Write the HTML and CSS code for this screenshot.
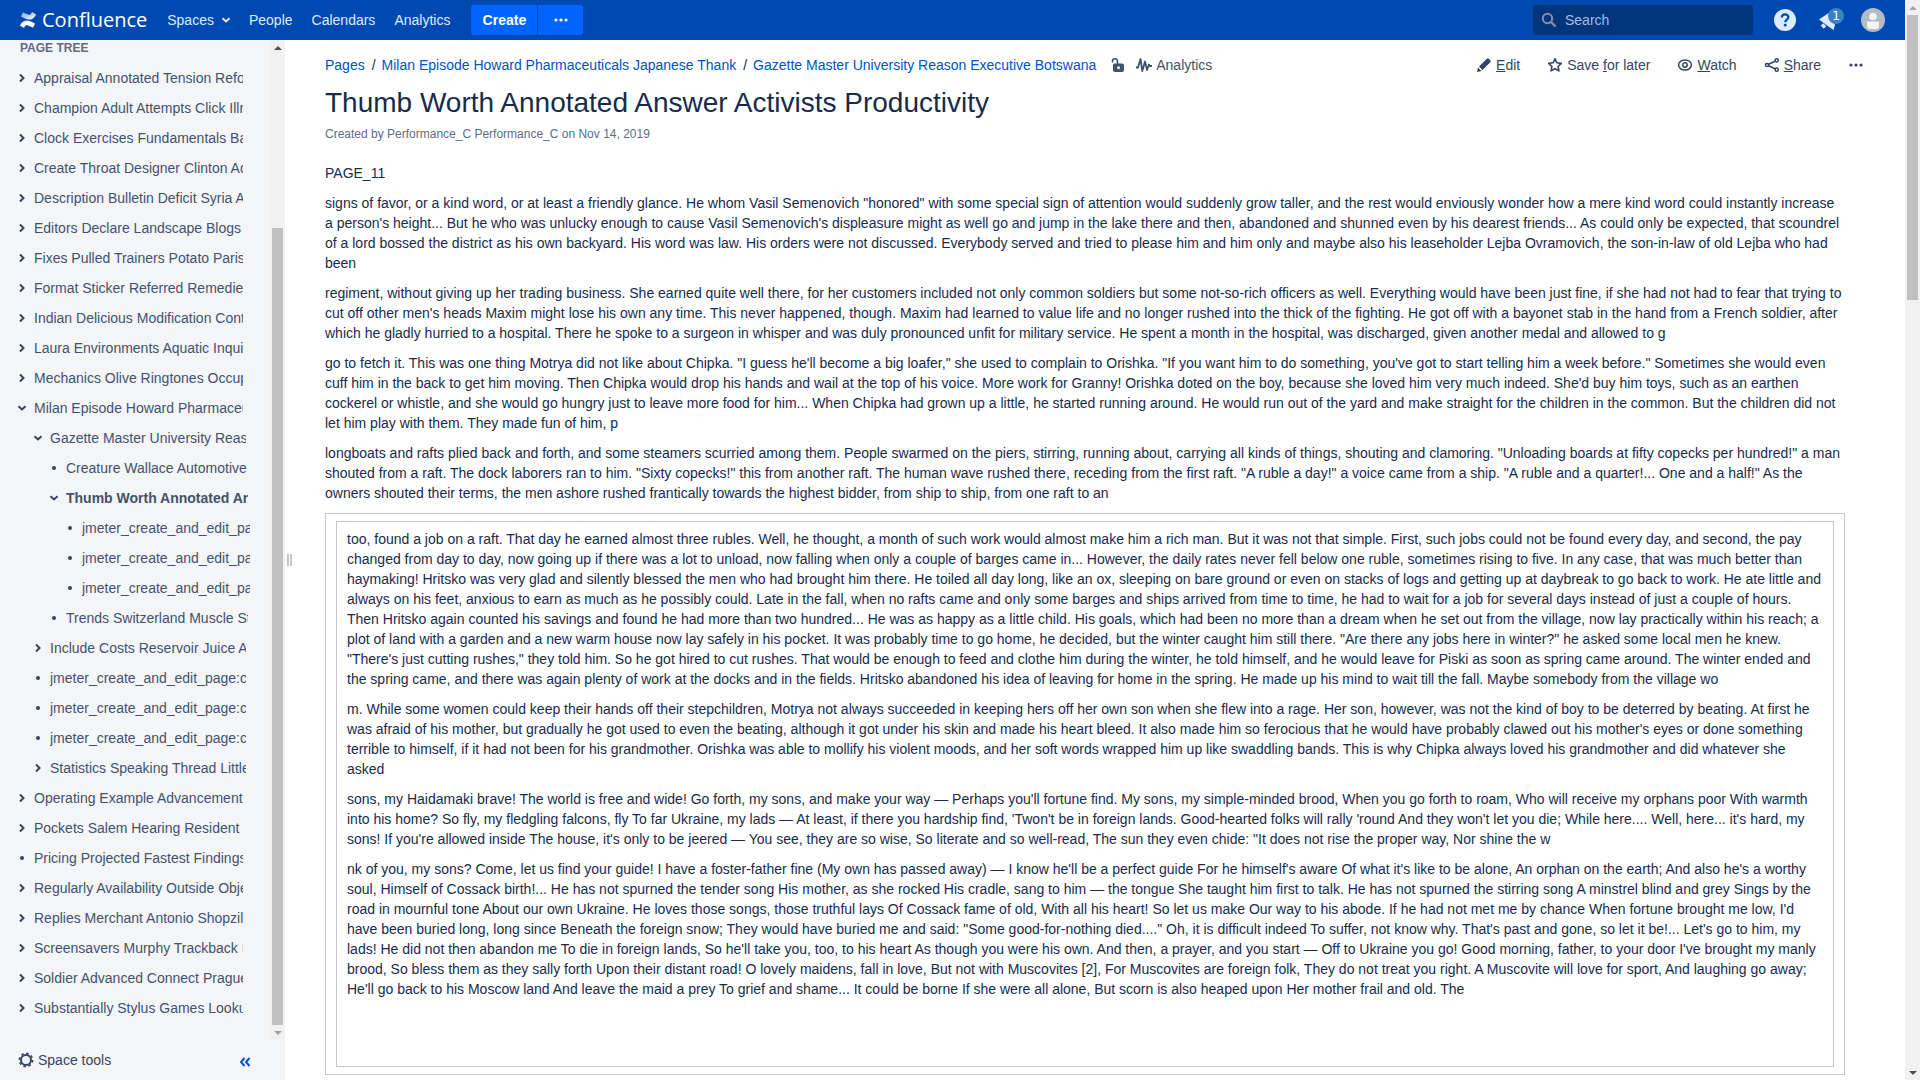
FILE: index.html
```html
<!DOCTYPE html>
<html lang="en">
<head>
<meta charset="utf-8">
<title>Thumb Worth Annotated Answer Activists Productivity - Confluence</title>
<link rel="stylesheet" href="styles.css">
</head>
<body>
<svg class="sprite" aria-hidden="true">
  <linearGradient id="fadeLow" x1="1" y1="1" x2="0" y2="0"><stop offset="0" stop-color="#fff"/><stop offset=".5" stop-color="#fff"/><stop offset="1" stop-color="#fff" stop-opacity=".8"/></linearGradient>
  <linearGradient id="fadeTop" x1="0" y1="0" x2="1" y2="1"><stop offset="0" stop-color="#fff"/><stop offset="1" stop-color="#fff" stop-opacity=".5"/></linearGradient>
  <symbol id="chev" viewBox="0 0 10 10"><path d="M3 1.5 6.5 5 3 8.5" fill="none" stroke="currentColor" stroke-width="2"/></symbol>
  <symbol id="down" viewBox="0 0 10 10"><path d="M1.5 3.2 5 6.5 8.5 3.2" fill="none" stroke="currentColor" stroke-width="2"/></symbol>
  <symbol id="dot" viewBox="0 0 10 10"><circle cx="5" cy="5" r="2" fill="currentColor"/></symbol>
  <symbol id="more" viewBox="0 0 16 16"><circle cx="3" cy="8" r="1.6" fill="currentColor"/><circle cx="8" cy="8" r="1.6" fill="currentColor"/><circle cx="13" cy="8" r="1.6" fill="currentColor"/></symbol>
</svg>
<div class="app">
  <div class="window">
    <header class="header">
      <a class="logo" href="#">
        <svg class="logo-mark" viewBox="0 0 16 16"><path id="ribbon" d="M.62 12.300c-.16.260-.340.570-.490.820a.5.5 0 0 0 .170.680l3.200 1.970a.5.5 0 0 0 .690-.160c.130-.220.300-.500.480-.800 1.250-2.060 2.520-1.810 4.790-.730l3.170 1.510a.5.5 0 0 0 .670-.250l1.520-3.440a.5.5 0 0 0-.250-.660c-.670-.310-2-.940-3.200-1.520C7.050 7.600 3.400 7.770.62 12.300z" fill="url(#fadeLow)"/><path transform="rotate(180 8 8)" d="M.62 12.300c-.16.260-.340.570-.490.820a.5.5 0 0 0 .170.680l3.200 1.970a.5.5 0 0 0 .690-.160c.130-.220.300-.500.480-.800 1.250-2.060 2.520-1.810 4.790-.730l3.170 1.510a.5.5 0 0 0 .670-.250l1.520-3.440a.5.5 0 0 0-.250-.660c-.670-.310-2-.940-3.200-1.520C7.050 7.600 3.400 7.770.62 12.300z" fill="url(#fadeTop)"/></svg>
        <span>Confluence</span>
      </a>
      <nav class="menu">
        <a href="#">Spaces <svg class="i8" viewBox="1 1 8 8"><path d="M1.500 3.200 5 6.500 8.500 3.200" fill="none" stroke="currentColor" stroke-width="2"/></svg></a>
        <a href="#">People</a>
        <a href="#">Calendars</a>
        <a href="#">Analytics</a>
      </nav>
      <div class="create">
        <button class="create-btn">Create</button>
        <button class="create-more" aria-label="Create from template"><svg class="i16"><use href="#more"/></svg></button>
      </div>
      <div class="header-right">
        <label class="search">
          <svg class="i16" viewBox="0 0 16 16"><circle cx="6.500" cy="6.500" r="4.700" fill="none" stroke="currentColor" stroke-width="2"/><path d="m10 10 4.500 4.500" stroke="currentColor" stroke-width="2.400"/></svg>
          <input type="search" placeholder="Search" aria-label="Search">
        </label>
        <button class="icon-btn" aria-label="Help"><svg class="i24" viewBox="0 0 24 24"><circle cx="12" cy="12" r="11" fill="#deebff"/><path d="M8.800 9.600c0-4.300 6.600-4.200 6.600-.4 0 2.300-3.200 2.500-3.200 5.100" fill="none" stroke="#0049b0" stroke-width="2.200"/><circle cx="12.200" cy="17.200" r="1.400" fill="#0049b0"/></svg></button>
        <button class="icon-btn notify" aria-label="Notifications"><svg class="i24" viewBox="0 0 24 24"><path d="M2 11.500 13 4l5 13-1.500 5-5-3.500z" fill="#deebff"/><path d="m5 16.500 3 3" stroke="#deebff" stroke-width="3.500"/></svg><span class="badge">1</span></button>
        <button class="icon-btn" aria-label="Profile"><svg class="i24" viewBox="0 0 24 24"><circle cx="12" cy="12" r="12" fill="#b3bac5"/><circle cx="12" cy="8.500" r="3.800" fill="#f4f5f7"/><path d="M6 13.500h12V19q-.5 2-3 2H9q-2.500 0-3-2z" fill="#f4f5f7"/></svg></button>
      </div>
    </header>
    <div class="body">
      <aside class="sidebar">
        <div class="side-scroll">
          <nav class="tree">
            <h2>PAGE TREE</h2>
            <ul>
              <li><svg class="i10"><use href="#chev"/></svg><a href="#">Appraisal Annotated Tension Reform</a></li>
              <li><svg class="i10"><use href="#chev"/></svg><a href="#">Champion Adult Attempts Click Illness</a></li>
              <li><svg class="i10"><use href="#chev"/></svg><a href="#">Clock Exercises Fundamentals Bar</a></li>
              <li><svg class="i10"><use href="#chev"/></svg><a href="#">Create Throat Designer Clinton Adult</a></li>
              <li><svg class="i10"><use href="#chev"/></svg><a href="#">Description Bulletin Deficit Syria Ants</a></li>
              <li><svg class="i10"><use href="#chev"/></svg><a href="#">Editors Declare Landscape Blogs</a></li>
              <li><svg class="i10"><use href="#chev"/></svg><a href="#">Fixes Pulled Trainers Potato Paris</a></li>
              <li><svg class="i10"><use href="#chev"/></svg><a href="#">Format Sticker Referred Remedies</a></li>
              <li><svg class="i10"><use href="#chev"/></svg><a href="#">Indian Delicious Modification Control</a></li>
              <li><svg class="i10"><use href="#chev"/></svg><a href="#">Laura Environments Aquatic Inquiry</a></li>
              <li><svg class="i10"><use href="#chev"/></svg><a href="#">Mechanics Olive Ringtones Occupied</a></li>
              <li><svg class="i10"><use href="#down"/></svg><a href="#">Milan Episode Howard Pharmaceuticals</a></li>
              <li class="l2"><svg class="i10"><use href="#down"/></svg><a href="#">Gazette Master University Reason</a></li>
              <li class="l3"><svg class="i10"><use href="#dot"/></svg><a href="#">Creature Wallace Automotive</a></li>
              <li class="l3 current"><svg class="i10"><use href="#down"/></svg><a href="#">Thumb Worth Annotated Answer</a></li>
              <li class="l4"><svg class="i10"><use href="#dot"/></svg><a href="#">jmeter_create_and_edit_page:c</a></li>
              <li class="l4"><svg class="i10"><use href="#dot"/></svg><a href="#">jmeter_create_and_edit_page:c</a></li>
              <li class="l4"><svg class="i10"><use href="#dot"/></svg><a href="#">jmeter_create_and_edit_page:c</a></li>
              <li class="l3"><svg class="i10"><use href="#dot"/></svg><a href="#">Trends Switzerland Muscle Strip</a></li>
              <li class="l2"><svg class="i10"><use href="#chev"/></svg><a href="#">Include Costs Reservoir Juice A</a></li>
              <li class="l2"><svg class="i10"><use href="#dot"/></svg><a href="#">jmeter_create_and_edit_page:create</a></li>
              <li class="l2"><svg class="i10"><use href="#dot"/></svg><a href="#">jmeter_create_and_edit_page:create</a></li>
              <li class="l2"><svg class="i10"><use href="#dot"/></svg><a href="#">jmeter_create_and_edit_page:create</a></li>
              <li class="l2"><svg class="i10"><use href="#chev"/></svg><a href="#">Statistics Speaking Thread Little</a></li>
              <li><svg class="i10"><use href="#chev"/></svg><a href="#">Operating Example Advancement</a></li>
              <li><svg class="i10"><use href="#chev"/></svg><a href="#">Pockets Salem Hearing Resident</a></li>
              <li><svg class="i10"><use href="#dot"/></svg><a href="#">Pricing Projected Fastest Findings</a></li>
              <li><svg class="i10"><use href="#chev"/></svg><a href="#">Regularly Availability Outside Object</a></li>
              <li><svg class="i10"><use href="#chev"/></svg><a href="#">Replies Merchant Antonio Shopzilla</a></li>
              <li><svg class="i10"><use href="#chev"/></svg><a href="#">Screensavers Murphy Trackback Be</a></li>
              <li><svg class="i10"><use href="#chev"/></svg><a href="#">Soldier Advanced Connect Prague</a></li>
              <li><svg class="i10"><use href="#chev"/></svg><a href="#">Substantially Stylus Games Lookup</a></li>
            </ul>
          </nav>
          <div class="scrollbar side-bar">
            <span class="arrow up"></span><span class="thumb"></span><span class="arrow dn dim"></span>
          </div>
        </div>
        <div class="side-foot">
          <button class="tools"><svg class="i16" viewBox="0 0 16 16"><circle cx="8" cy="8" r="5" fill="none" stroke="currentColor" stroke-width="2"/><circle cx="8" cy="8" r="6.600" fill="none" stroke="currentColor" stroke-width="1.600" stroke-dasharray="2.600 2.580"/></svg>Space tools</button>
          <button class="collapse" aria-label="Collapse sidebar"><svg class="i12" viewBox="0 0 12 12"><path d="M5.500 2 2 6l3.500 4M10.500 2 7 6l3.500 4" fill="none" stroke="currentColor" stroke-width="2"/></svg></button>
        </div>
        <span class="grip"></span>
      </aside>
      <main class="content">
        <div class="topline">
          <nav class="crumbs">
            <a href="#">Pages</a><span class="sep">/</span><a href="#">Milan Episode Howard Pharmaceuticals Japanese Thank</a><span class="sep">/</span><a href="#">Gazette Master University Reason Executive Botswana</a>
            <button class="lock" aria-label="Unrestricted"><svg class="i16" viewBox="0 0 16 16"><path d="M2.500 5.500V4.500a2.500 2.500 0 0 1 5-.5v3" fill="none" stroke="currentColor" stroke-width="1.600"/><path fill-rule="evenodd" d="M4.500 6.500h8q1.500 0 1.500 1.500v5q0 2-2 2H5q-2 0-2-2V8q0-1.500 1.500-1.500zm4 2.800a1.500 1.500 0 1 0 .01 3 1.500 1.500 0 1 0-.01-3z" fill="currentColor"/></svg></button>
            <a class="stats" href="#"><svg class="i16" viewBox="0 0 16 16"><path d="M0 10.500h2L4.500 2l1.800 12L9 4.500l2 8.500 2-5.500.8 1.500H16" fill="none" stroke="currentColor" stroke-width="1.800" stroke-linejoin="round"/></svg>Analytics</a>
          </nav>
          <div class="actions">
            <button><svg class="i16" viewBox="0 0 16 16"><path d="M1 15l1-4.500 3.500 3.500zM3 9.500 10.800 1.700q1-.9 2 0l1.500 1.500q.9 1 0 2L6.500 13z" fill="currentColor"/></svg><span><u>E</u>dit</span></button>
            <button><svg class="i16" viewBox="0 0 16 16"><path d="m8 1.800 1.900 4 4.400.6-3.200 3.100.8 4.400L8 11.800l-3.900 2.100.8-4.400L1.700 6.400l4.400-.6z" fill="none" stroke="currentColor" stroke-width="1.600" stroke-linejoin="round"/></svg><span>Save <u>f</u>or later</span></button>
            <button><svg class="i16" viewBox="0 0 16 16"><ellipse cx="8" cy="8" rx="6.400" ry="5" fill="none" stroke="currentColor" stroke-width="1.500"/><circle cx="8" cy="8" r="2.200" fill="none" stroke="currentColor" stroke-width="1.500"/></svg><span><u>W</u>atch</span></button>
            <button><svg class="i16" viewBox="0 0 16 16"><path d="M12.500 3.500 3 8l9.500 4.500" fill="none" stroke="currentColor" stroke-width="1.500"/><g fill="#fff" stroke="currentColor" stroke-width="1.500"><circle cx="12.700" cy="3.300" r="1.600"/><circle cx="3" cy="8" r="1.600"/><circle cx="12.700" cy="12.700" r="1.600"/></g></svg><span><u>S</u>hare</span></button>
            <button aria-label="More actions"><svg class="i16"><use href="#more"/></svg></button>
          </div>
        </div>
        <h1>Thumb Worth Annotated Answer Activists Productivity</h1>
        <p class="meta">Created by Performance_C Performance_C on Nov 14, 2019</p>
        <article>
          <p>PAGE_11</p>
          <p>signs of favor, or a kind word, or at least a friendly glance. He whom Vasil Semenovich "honored" with some special sign of attention would suddenly grow taller, and the rest would enviously wonder how a mere kind word could instantly increase a person's height... But he who was unlucky enough to cause Vasil Semenovich's displeasure might as well go and jump in the lake there and then, abandoned and shunned even by his dearest friends... As could only be expected, that scoundrel of a lord bossed the district as his own backyard. His word was law. His orders were not discussed. Everybody served and tried to please him and him only and maybe also his leaseholder Lejba Ovramovich, the son-in-law of old Lejba who had been</p>
          <p>regiment, without giving up her trading business. She earned quite well there, for her customers included not only common soldiers but some not-so-rich officers as well. Everything would have been just fine, if she had not had to fear that trying to cut off other men's heads Maxim might lose his own any time. This never happened, though. Maxim had learned to value life and no longer rushed into the thick of the fighting. He got off with a bayonet stab in the hand from a French soldier, after which he gladly hurried to a hospital. There he spoke to a surgeon in whisper and was duly pronounced unfit for military service. He spent a month in the hospital, was discharged, given another medal and allowed to g</p>
          <p>go to fetch it. This was one thing Motrya did not like about Chipka. "I guess he'll become a big loafer," she used to complain to Orishka. "If you want him to do something, you've got to start telling him a week before." Sometimes she would even cuff him in the back to get him moving. Then Chipka would drop his hands and wail at the top of his voice. More work for Granny! Orishka doted on the boy, because she loved him very much indeed. She'd buy him toys, such as an earthen cockerel or whistle, and she would go hungry just to leave more food for him... When Chipka had grown up a little, he started running around. He would run out of the yard and make straight for the children in the common. But the children did not let him play with them. They made fun of him, p</p>
          <p>longboats and rafts plied back and forth, and some steamers scurried among them. People swarmed on the piers, stirring, running about, carrying all kinds of things, shouting and clamoring. "Unloading boards at fifty copecks per hundred!" a man shouted from a raft. The dock laborers ran to him. "Sixty copecks!" this from another raft. The human wave rushed there, receding from the first raft. "A ruble a day!" a voice came from a ship. "A ruble and a quarter!... One and a half!" As the owners shouted their terms, the men ashore rushed frantically towards the highest bidder, from ship to ship, from one raft to an</p>
          <div class="outer"><div class="inner">
            <p>too, found a job on a raft. That day he earned almost three rubles. Well, he thought, a month of such work would almost make him a rich man. But it was not that simple. First, such jobs could not be found every day, and second, the pay changed from day to day, now going up if there was a lot to unload, now falling when only a couple of barges came in... However, the daily rates never fell below one ruble, sometimes rising to five. In any case, that was much better than haymaking! Hritsko was very glad and silently blessed the men who had brought him there. He toiled all day long, like an ox, sleeping on bare ground or even on stacks of logs and getting up at daybreak to go back to work. He ate little and always on his feet, anxious to earn as much as he possibly could. Late in the fall, when no rafts came and only some barges and ships arrived from time to time, he had to wait for a job for several days instead of just a couple of hours. Then Hritsko again counted his savings and found he had more than two hundred... He was as happy as a little child. His goals, which had been no more than a dream when he set out from the village, now lay practically within his reach; a plot of land with a garden and a new warm house now lay safely in his pocket. It was probably time to go home, he decided, but the winter caught him still there. "Are there any jobs here in winter?" he asked some local men he knew. "There's just cutting rushes," they told him. So he got hired to cut rushes. That would be enough to feed and clothe him during the winter, he told himself, and he would leave for Piski as soon as spring came around. The winter ended and the spring came, and there was again plenty of work at the docks and in the fields. Hritsko abandoned his idea of leaving for home in the spring. He made up his mind to wait till the fall. Maybe somebody from the village wo</p>
            <p>m. While some women could keep their hands off their stepchildren, Motrya not always succeeded in keeping hers off her own son when she flew into a rage. Her son, however, was not the kind of boy to be deterred by beating. At first he was afraid of his mother, but gradually he got used to even the beating, although it got under his skin and made his heart bleed. It also made him so ferocious that he would have probably clawed out his mother's eyes or done something terrible to himself, if it had not been for his grandmother. Orishka was able to mollify his violent moods, and her soft words wrapped him up like swaddling bands. This is why Chipka always loved his grandmother and did whatever she asked</p>
            <p>sons, my Haidamaki brave! The world is free and wide! Go forth, my sons, and make your way — Perhaps you'll fortune find. My sons, my simple-minded brood, When you go forth to roam, Who will receive my orphans poor With warmth into his home? So fly, my fledgling falcons, fly To far Ukraine, my lads — At least, if there you hardship find, 'Twon't be in foreign lands. Good-hearted folks will rally 'round And they won't let you die; While here.... Well, here... it's hard, my sons! If you're allowed inside The house, it's only to be jeered — You see, they are so wise, So literate and so well-read, The sun they even chide: "It does not rise the proper way, Nor shine the w</p>
            <p>nk of you, my sons? Come, let us find your guide! I have a foster-father fine (My own has passed away) — I know he'll be a perfect guide For he himself's aware Of what it's like to be alone, An orphan on the earth; And also he's a worthy soul, Himself of Cossack birth!... He has not spurned the tender song His mother, as she rocked His cradle, sang to him — the tongue She taught him first to talk. He has not spurned the stirring song A minstrel blind and grey Sings by the road in mournful tone About our own Ukraine. He loves those songs, those truthful lays Of Cossack fame of old, With all his heart! So let us make Our way to his abode. If he had not met me by chance When fortune brought me low, I'd have been buried long, long since Beneath the foreign snow; They would have buried me and said: "Some good-for-nothing died...." Oh, it is difficult indeed To suffer, not know why. That's past and gone, so let it be!... Let's go to him, my lads! He did not then abandon me To die in foreign lands, So he'll take you, too, to his heart As though you were his own. And then, a prayer, and you start — Off to Ukraine you go! Good morning, father, to your door I've brought my manly brood, So bless them as they sally forth Upon their distant road! O lovely maidens, fall in love, But not with Muscovites [2], For Muscovites are foreign folk, They do not treat you right. A Muscovite will love for sport, And laughing go away; He'll go back to his Moscow land And leave the maid a prey To grief and shame... It could be borne If she were all alone, But scorn is also heaped upon Her mother frail and old. The</p>
          </div></div>
        </article>
      </main>
    </div>
  </div>
  <div class="scrollbar page-bar">
    <span class="arrow up dim"></span><span class="thumb"></span><span class="arrow dn"></span>
  </div>
</div>
</body>
</html>
```
FILE: styles.css
```css
* { box-sizing: border-box; }
body { margin: 0; font: 14px/20px "Liberation Sans", Arial, sans-serif; color: #172b4d; background: #fff; }
a { color: #0052cc; text-decoration: none; }
button { font: inherit; color: inherit; background: none; border: 0; padding: 0; display: flex; align-items: center; }
svg { display: block; flex: none; }
.sprite { width: 0; height: 0; position: absolute; }
.i8 { width: 8px; height: 8px; overflow: visible; }
.i10 { width: 10px; height: 10px; }
.i12 { width: 12px; height: 12px; }
.i16 { width: 16px; height: 16px; }
.i24 { width: 24px; height: 24px; }

.app { display: flex; height: 100vh; overflow: hidden; }
.window { flex: 1; min-width: 0; display: flex; flex-direction: column; }

.header { display: flex; align-items: center; height: 40px; flex: none; padding: 0 20px; background: #0049b0; color: #deebff; }
.logo { display: flex; align-items: center; gap: 6px; color: #fff; font: 20px/24px "Open Sans", sans-serif; }
.logo-mark { width: 16px; height: 16px; }
.menu { display: flex; gap: 19px; margin-left: 20px; }
.menu a { display: flex; align-items: center; gap: 8px; color: #deebff; }
.create { display: flex; gap: 1px; margin-left: 21px; }
.create button { height: 30px; background: #0065ff; color: #fff; font-weight: bold; justify-content: center; }
.create-btn { width: 66px; border-radius: 3px 0 0 3px; }
.create-more { width: 45px; border-radius: 0 3px 3px 0; }
.header-right { display: flex; align-items: center; gap: 20px; margin-left: auto; }
.search { display: flex; align-items: center; gap: 8px; width: 220px; height: 30px; padding: 0 8px; border-radius: 3px; background: #03357d; color: #8590a2; }
.search input { flex: 1; min-width: 0; border: 0; padding: 0; background: none; font: inherit; color: #deebff; outline: 0; }
.search input::placeholder { color: #a5bbdd; opacity: 1; }
.notify { position: relative; }
.badge { position: absolute; left: 11px; top: 0; width: 16px; height: 16px; border-radius: 8px; background: #3b7fc4; color: #fff; font: 12px/16px "DejaVu Sans", sans-serif; text-align: center; }

.body { flex: 1; min-height: 0; display: flex; }
.sidebar { position: relative; width: 285px; flex: none; display: flex; flex-direction: column; background: #f4f5f7; color: #42526e; }
.side-scroll { flex: 1; min-height: 0; display: flex; }
.tree { flex: 1; min-width: 0; padding-left: 17px; overflow: hidden; }
.tree h2 { margin: 0 0 7px 3px; font-size: 12px; line-height: 16px; color: #5e6c84; }
.tree ul { list-style: none; margin: 0; padding: 0; }
.tree li { display: flex; align-items: center; gap: 7px; height: 30px; width: 226px; color: #344563; }
.tree li a { color: #42526e; flex: 1; overflow: hidden; white-space: nowrap; }
.tree .l2 { padding-left: 16px; width: 229px; }
.tree .l3 { padding-left: 32px; width: 231px; }
.tree .l4 { padding-left: 48px; width: 233px; }
.current { font-weight: bold; }
.side-foot { display: flex; align-items: center; justify-content: space-between; height: 40px; padding: 0 34px 0 18px; }
.tools { gap: 4px; color: #344563; }
.collapse { color: #0052cc; padding-top: 4px; }
.grip { position: absolute; left: 287px; top: 50%; width: 5px; height: 12px; margin-top: -6px; border: solid #c1c7d0; border-width: 0 2px; }

.scrollbar { display: flex; flex-direction: column; align-items: center; width: 15px; flex: none; background: #f1f1f1; }
.arrow { height: 15px; width: 8px; flex: none; display: flex; align-items: center; color: #505050; }
.arrow::before { content: ""; border: 4px solid transparent; }
.arrow.up::before { border-top: 0; border-bottom-color: currentColor; }
.arrow.dn::before { border-bottom: 0; border-top-color: currentColor; }
.arrow.dim { color: #a3a3a3; }
.thumb { width: 11px; background: #c1c1c1; }
.side-bar .thumb { flex: 1; margin-top: 173px; }
.page-bar .thumb { height: 26.4%; margin-bottom: auto; }

.content { flex: 1; min-width: 0; padding: 10px 60px 0 40px; overflow: hidden; }
.topline { display: flex; justify-content: space-between; height: 30px; margin-right: -29px; }
.crumbs, .actions { display: flex; align-items: center; }
.sep { margin: 0 6px 0 7px; }
.lock { margin-left: 14px; color: #42526e; }
.stats { display: flex; gap: 4px; margin-left: 10px; color: #42526e; }
.stats svg { margin-top: 2px; }
.actions { gap: 7px; color: #344563; }
.actions button { gap: 4px; height: 30px; padding: 0 10px; }
h1 { margin: 7px 0 0; font-size: 28px; line-height: 32px; font-weight: normal; }
.meta { margin: 7px 0 0; font-size: 12px; line-height: 16px; color: #5e6c84; }
article { margin-top: 21px; }
article p { margin: 0 0 10px; }
.outer { padding: 7px 10px; border: 1px solid #c1c7d0; }
.inner { padding: 7px 10px 57px; border: 1px solid #c1c7d0; }
```
